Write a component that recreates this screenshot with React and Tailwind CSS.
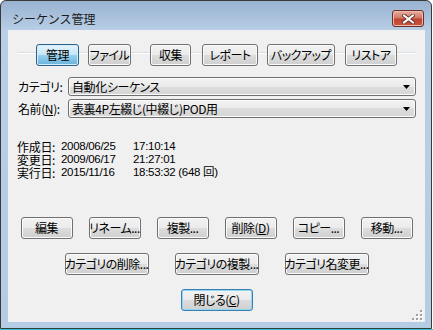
import React from "react";

const FONT = "font-['Noto_Sans_CJK_JP',sans-serif] [font-feature-settings:'palt']";
const NUM = "font-['Liberation_Sans','Noto_Sans_CJK_JP',sans-serif] text-[11.5px]";

const NORMAL =
  "border-[#707070] bg-[linear-gradient(#f2f2f2_0%,#ebebeb_50%,#dddddd_50%,#cfcfcf_100%)] shadow-[inset_0_0_0_1px_#fbfbfb]";
const SELECTED =
  "border-[#2c628b] bg-[linear-gradient(#e5f4fc_0%,#c4e5f6_50%,#98d1ef_50%,#68b3db_100%)] shadow-[inset_0_0_0_1px_#d4edfa]";
const DEFAULT =
  "border-[#3c7fb1] bg-[linear-gradient(#f2f2f2_0%,#ebebeb_50%,#dddddd_50%,#cfcfcf_100%)] shadow-[inset_0_0_0_1px_#8fd6f5]";

function Btn({ w, kind = NORMAL, className = "", children }) {
  return (
    <div
      className={`relative z-10 flex h-[22px] shrink-0 items-center justify-center whitespace-nowrap rounded-[3px] border text-[12px] leading-none tracking-[-0.5px] text-black ${kind} ${className}`}
      style={{ width: w }}
    >
      {children}
    </div>
  );
}

function Combo({ text }) {
  return (
    <div className="flex h-[19px] w-[348px] shrink-0 items-center justify-between rounded-[3px] border border-[#707070] bg-[linear-gradient(#f2f2f2_0%,#ebebeb_50%,#dddddd_50%,#d6d6d6_100%)] pl-[3px] pr-[5px] text-[12px] leading-none tracking-[-0.4px] text-black shadow-[inset_0_0_0_1px_#fbfbfb]">
      <span className="whitespace-nowrap">{text}</span>
      <svg width="7" height="4" viewBox="0 0 7 4">
        <path d="M0 0 H7 L3.5 4 Z" fill="#000" />
      </svg>
    </div>
  );
}

function Grip() {
  const dots = [
    [8, 0],
    [4, 4],
    [8, 4],
    [0, 8],
    [4, 8],
    [8, 8],
  ];
  return (
    <svg width="11" height="11" viewBox="0 0 11 11" className="absolute bottom-[1px] right-[2px]">
      {dots.map(([x, y], i) => (
        <g key={i}>
          <rect x={x + 1} y={y + 1} width="2" height="2" fill="#ffffff" />
          <rect x={x} y={y} width="2" height="2" fill="#a0a0a0" />
        </g>
      ))}
    </svg>
  );
}

function DateRow({ label, date, time }) {
  return (
    <div className="flex whitespace-nowrap">
      <span className="w-[44px] shrink-0">{label}</span>
      <span className={`w-[72px] shrink-0 ${NUM}`}>{date}</span>
      <span className={`shrink-0 ${NUM}`}>{time}</span>
    </div>
  );
}

export default function App() {
  return (
    <div className={`flex h-[330px] w-[433px] flex-col bg-white ${FONT}`}>
      <div className="flex h-[329px] w-[432px] flex-col rounded-t-[6px] border border-[#3a3a3a] bg-[linear-gradient(#98b2d0_0px,#b9cfe7_30px,#b5cce5_100%)]">
        {/* title bar */}
        <div className="flex h-[29px] shrink-0 items-start justify-between pl-[11px] pr-[7px]">
          <div className="mt-[10px] text-[12px] leading-[16px] text-[#1b1b1b] [font-feature-settings:normal]">
            シーケンス管理
          </div>
          <div className="mt-[9px] flex h-[17px] w-[32px] items-center justify-center rounded-[3px] border border-[#6e2d27] bg-[linear-gradient(#e8b0a4_0%,#d47865_45%,#c1412e_55%,#c75a45_100%)] shadow-[inset_0_0_0_1px_#eeb9ad]">
            <svg width="13" height="10" viewBox="0 0 13 10">
              <path d="M2 1.5 L11 8.5 M11 1.5 L2 8.5" stroke="#5b2a24" strokeWidth="3.6" strokeLinecap="square" />
              <path d="M2 1.5 L11 8.5 M11 1.5 L2 8.5" stroke="#ffffff" strokeWidth="2" strokeLinecap="square" />
            </svg>
          </div>
        </div>

        {/* client area */}
        <div className="relative ml-[7px] mr-[6px] flex h-[292px] flex-col bg-[#f0f0f0]">
          {/* tab-like buttons with group line */}
          <div className="relative mt-[14px] flex h-[22px] pl-[28px]">
            <div className="absolute left-[10px] right-[10px] top-[8px] h-[1px] bg-[#d5dfe5]" />
            <div className="absolute left-[10px] right-[10px] top-[9px] h-[1px] bg-[#ffffff]" />
            <Btn w={43} kind={SELECTED}>管理</Btn>
            <Btn w={43} className="ml-[9px]">ファイル</Btn>
            <Btn w={41} className="ml-[19px]">収集</Btn>
            <Btn w={56} className="ml-[11px]">レポート</Btn>
            <Btn w={68} className="ml-[9px]">バックアップ</Btn>
            <Btn w={52} className="ml-[10px]">リストア</Btn>
          </div>

          {/* combos */}
          <div className="mt-[11px] flex flex-col gap-[3px] pl-[10px] text-[12px] leading-none tracking-[-0.4px] text-black">
            <div className="flex items-center">
              <div className="w-[50px] shrink-0 whitespace-nowrap">カテゴリ:</div>
              <Combo text="自動化シーケンス" />
            </div>
            <div className="flex items-center">
              <div className="w-[50px] shrink-0 whitespace-nowrap">
                名前(<span className="underline">N</span>):
              </div>
              <Combo text="表裏4P左綴じ(中綴じ)POD用" />
            </div>
          </div>

          {/* dates */}
          <div className="mt-[22px] flex flex-col pl-[9px] text-[12px] leading-[13px] tracking-[-0.3px] text-black">
            <DateRow label="作成日:" date="2008/06/25" time="17:10:14" />
            <DateRow label="変更日:" date="2009/06/17" time="21:27:01" />
            <DateRow label="実行日:" date="2015/11/16" time="18:53:32 (648 回)" />
          </div>

          {/* buttons */}
          <div className="mt-[38px] flex justify-center gap-[16px]">
            <Btn w={52}>編集</Btn>
            <Btn w={52}>リネーム...</Btn>
            <Btn w={52}>複製...</Btn>
            <Btn w={52}>
              削除(<span className="underline">D</span>)
            </Btn>
            <Btn w={52}>コピー...</Btn>
            <Btn w={52}>移動...</Btn>
          </div>
          <div className="mt-[14px] flex justify-center gap-[26px]">
            <Btn w={84}>カテゴリの削除...</Btn>
            <Btn w={84}>カテゴリの複製...</Btn>
            <Btn w={84}>カテゴリ名変更...</Btn>
          </div>
          <div className="mt-[14px] flex justify-center">
            <Btn w={72} kind={DEFAULT}>
              閉じる(<span className="underline">C</span>)
            </Btn>
          </div>

          <Grip />
        </div>
      </div>
      <div className="h-[1px] w-[433px] bg-[#2ec3d3]" />
    </div>
  );
}
